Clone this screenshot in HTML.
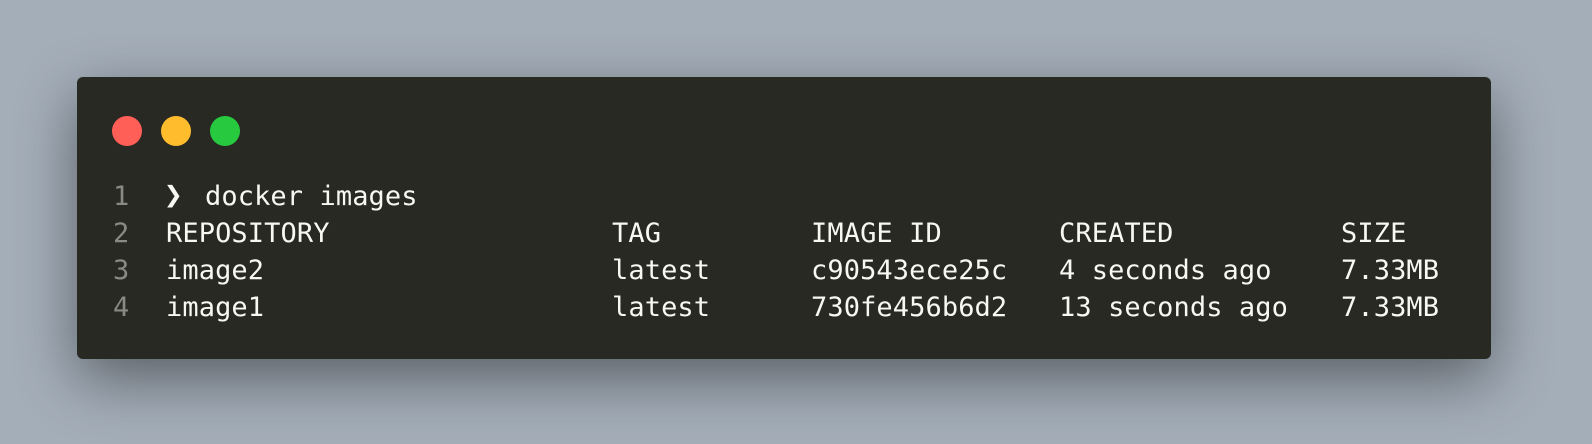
<!DOCTYPE html>
<html><head><style>
html,body{margin:0;padding:0}
body{width:1592px;height:444px;background:#a4aeb9;position:relative;overflow:hidden;font-family:"DejaVu Sans Mono","Liberation Mono",monospace;}
.win{position:absolute;left:77px;top:77px;width:1414px;height:282px;background:#282923;border-radius:6px;box-shadow:0 20px 60px rgba(0,0,0,0.45);}
.dot{position:absolute;top:116px;width:30px;height:30px;border-radius:50%}
.t{position:absolute;font-size:27px;color:#f8f8f2;white-space:pre;line-height:37px;letter-spacing:0.1px}
.n{color:#8a8a84}
</style></head><body>
<div class="win"></div>
<div class="dot" style="left:112px;background:#ff5f56"></div>
<div class="dot" style="left:161px;background:#ffbd2e"></div>
<div class="dot" style="left:210px;background:#27c93f"></div>

<div class="t n" style="left:113px;top:178px">1</div>
<div class="t n" style="left:113px;top:215px">2</div>
<div class="t n" style="left:113px;top:252px">3</div>
<div class="t n" style="left:113px;top:289px">4</div>

<div class="t" style="left:164px;top:177px;font-size:31px;font-weight:bold">❯</div>
<div class="t" style="left:205px;top:178px">docker images</div>

<div class="t" style="left:166px;top:215px">REPOSITORY</div>
<div class="t" style="left:612px;top:215px">TAG</div>
<div class="t" style="left:811px;top:215px">IMAGE ID</div>
<div class="t" style="left:1059px;top:215px">CREATED</div>
<div class="t" style="left:1341px;top:215px">SIZE</div>

<div class="t" style="left:166px;top:252px">image2</div>
<div class="t" style="left:612px;top:252px">latest</div>
<div class="t" style="left:811px;top:252px">c90543ece25c</div>
<div class="t" style="left:1059px;top:252px">4 seconds ago</div>
<div class="t" style="left:1341px;top:252px">7.33MB</div>

<div class="t" style="left:166px;top:289px">image1</div>
<div class="t" style="left:612px;top:289px">latest</div>
<div class="t" style="left:811px;top:289px">730fe456b6d2</div>
<div class="t" style="left:1059px;top:289px">13 seconds ago</div>
<div class="t" style="left:1341px;top:289px">7.33MB</div>
</body></html>
